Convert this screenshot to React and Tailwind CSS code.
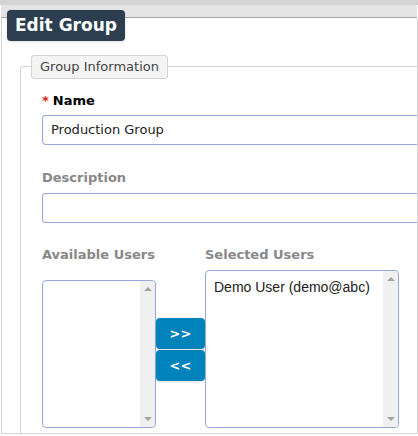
export default function App() {
  const vf = { fontFamily: '"DejaVu Sans", Verdana, sans-serif' };
  const af = { fontFamily: '"Liberation Sans", Arial, sans-serif' };
  const Scroll = () => (
    <div className="w-[15px] bg-[#f0f0f0] flex flex-col justify-between items-center py-[6px] rounded-r-[4px]">
      <div className="w-0 h-0 border-l-[4px] border-r-[4px] border-b-[4px] border-l-transparent border-r-transparent border-b-[#a3a3a3]" />
      <div className="w-0 h-0 border-l-[4px] border-r-[4px] border-t-[4px] border-l-transparent border-r-transparent border-t-[#a3a3a3]" />
    </div>
  );
  return (
    <div className="w-[418px] h-[436px] bg-white overflow-hidden relative" style={vf}>
      <div className="h-[5px] bg-[#d4d4d4]" />
      <div className="h-[13px] bg-[#e4e4e4] border-b border-[#a8a8a8] mx-[1px]" />
      <div className="absolute left-[7px] top-[10px] h-[31px] px-[8px] bg-[#2c3e50] rounded-[4px] text-white font-bold text-[17px] leading-[31px] shadow">Edit Group</div>
      <div className="ml-[1px] w-[417px] h-[416px] border-l border-r border-b border-[#d4d4d4] pt-[48px] pl-[18px] overflow-hidden">
        <div className="border border-[#d4d4d4] border-r-0 rounded-tl-[3px] h-[400px] relative pl-[21px] pt-[24px]">
          <div className="absolute left-[10px] top-[-12px] h-[24px] px-[8px] bg-[#f4f4f4] border border-[#d4d4d4] rounded-[3px] text-[13px] text-[#444] leading-[22px]">Group Information</div>
          <div className="text-[13px] font-bold text-black h-[20px] leading-[20px]"><span className="text-[#e02020] mr-[4px]">*</span>Name</div>
          <div className="mt-[4px] h-[30px] border border-[#98a8d8] rounded-l-[4px] border-r-0 text-[13px] leading-[28px] pl-[8px] text-[#222]">Production Group</div>
          <div className="mt-[23px] text-[13px] font-bold text-[#888] h-[20px] leading-[20px]">Description</div>
          <div className="mt-[5px] h-[30px] border border-[#98a8d8] rounded-l-[4px] border-r-0" />
          <div className="mt-[22px] flex">
            <div className="w-[114px]">
              <div className="text-[13px] font-bold text-[#888] h-[20px] leading-[20px]">Available Users</div>
              <div className="mt-[15px] h-[148px] border border-[#98a8d8] rounded-[4px] flex justify-end"><Scroll /></div>
            </div>
            <div className="w-[49px] flex flex-col pt-[73px] gap-[1px]">
              <div className="h-[31px] bg-[#0082ba] rounded-[4px] text-white font-bold text-[13px] flex items-center justify-center shadow">&gt;&gt;</div>
              <div className="h-[31px] bg-[#0082ba] rounded-[4px] text-white font-bold text-[13px] flex items-center justify-center shadow">&lt;&lt;</div>
            </div>
            <div className="w-[194px]">
              <div className="text-[13px] font-bold text-[#888] h-[20px] leading-[20px]">Selected Users</div>
              <div className="mt-[5px] h-[158px] border border-[#98a8d8] rounded-[4px] flex justify-between">
                <div className="pl-[8px] pt-[6px] text-[14px] text-[#222]" style={af}>Demo User (demo@abc)</div>
                <Scroll />
              </div>
            </div>
          </div>
        </div>
      </div>
    </div>
  );
}
